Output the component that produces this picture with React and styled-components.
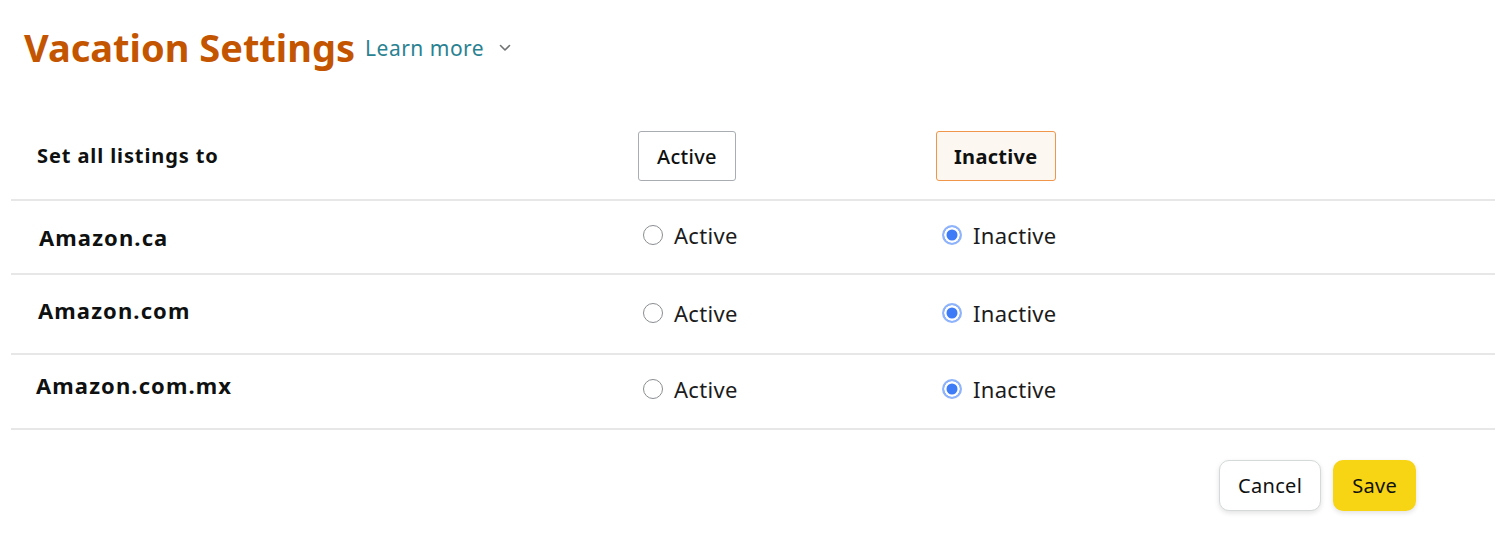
import React, { useState } from "react";
import styled, { createGlobalStyle } from "styled-components";

const GlobalStyle = createGlobalStyle`
  body {
    margin: 0;
    background: #fff;
    font-family: "Noto Sans", "Open Sans", Arial, sans-serif;
    color: #0f1111;
  }
`;

const Page = styled.div`
  width: 1508px;
  height: 534px;
  box-sizing: border-box;
  padding: 21px 13px 0 11px;
`;

const Header = styled.div`
  display: flex;
  align-items: baseline;
  padding-left: 13px;
  height: 90px;
`;

const Title = styled.h1`
  margin: 0;
  font-size: 38px;
  font-weight: 700;
  color: #c45500;
`;

const LearnMore = styled.a`
  margin-left: 10px;
  font-size: 21px;
  letter-spacing: 0.5px;
  color: #2a8291;
  text-decoration: none;
  display: inline-flex;
  align-items: center;
  gap: 15px;
  position: relative;
  top: -6px;
`;

const Table = styled.div`
  display: grid;
  grid-template-columns: 627px 298px 1fr;
`;

const Cell = styled.div`
  display: flex;
  align-items: center;
  height: ${(p) => p.h}px;
  border-bottom: 2px solid #e7e7e7;
  box-sizing: border-box;
  padding-left: ${(p) => p.pl || 0}px;
  padding-top: ${(p) => p.pt || 0}px;
  padding-bottom: ${(p) => p.pb || 0}px;
`;

const HeadLabel = styled.span`
  font-size: 20px;
  font-weight: 700;
  letter-spacing: 0.9px;
`;

const SiteLabel = styled.span`
  font-size: 22px;
  font-weight: 700;
  letter-spacing: 1.1px;
`;

const SetButton = styled.button`
  height: 50px;
  padding: 0 ${(p) => (p.selected ? 17 : 18)}px;
  font-family: inherit;
  font-size: 20px;
  letter-spacing: 0.3px;
  font-weight: ${(p) => (p.selected ? 700 : 500)};
  color: #0f1111;
  border-radius: 3px;
  border: 1.5px solid ${(p) => (p.selected ? "#f0964a" : "#a9adb2")};
  background: ${(p) => (p.selected ? "#fdf7f1" : "#fff")};
  cursor: pointer;
`;

const RadioLabel = styled.label`
  display: inline-flex;
  align-items: center;
  gap: 11px;
  font-size: 22px;
  letter-spacing: 0.3px;
  color: #1c1c1c;
  cursor: pointer;
  margin-left: ${(p) => p.ml || 0}px;
`;

const RadioCircle = styled.span`
  width: 20px;
  height: 20px;
  box-sizing: border-box;
  border-radius: 50%;
  border: ${(p) => (p.checked ? "2px solid #8fb4fb" : "1.5px solid #8a8d91")};
  background: ${(p) => (p.checked ? "#3d7bf7" : "#fff")};
  box-shadow: ${(p) => (p.checked ? "inset 0 0 0 2.5px #fff" : "none")};
`;

const Footer = styled.div`
  display: flex;
  justify-content: flex-end;
  gap: 12px;
  padding: 30px 79px 0 0;
`;

const FooterButton = styled.button`
  height: 51px;
  padding: 0 ${(p) => (p.primary ? 19 : 18)}px;
  border-radius: 10px;
  font-family: inherit;
  font-size: 20px;
  letter-spacing: 0.3px;
  color: #0f1111;
  border: ${(p) => (p.primary ? "none" : "1.5px solid #d5d9d9")};
  background: ${(p) => (p.primary ? "#f7d414" : "#fff")};
  box-shadow: 0 2px 5px rgba(15, 17, 17, 0.12);
  cursor: pointer;
`;

const Chevron = () => (
  <svg width="12" height="8" viewBox="0 0 12 8" fill="none">
    <path d="M1.5 1.5 6 6l4.5-4.5" stroke="#6f7373" strokeWidth="1.6" strokeLinecap="round" strokeLinejoin="round" />
  </svg>
);

const Radio = ({ checked, label, onClick, ml }) => (
  <RadioLabel onClick={onClick} ml={ml}>
    <RadioCircle checked={checked} />
    {label}
  </RadioLabel>
);

// per-row heights and nudges so the rows sit where the original does
const sites = [
  { name: "Amazon.ca", h: 74, pl: 28, textPb: 0, radioPb: 4 },
  { name: "Amazon.com", h: 80, pl: 27, textPb: 8, radioPb: 2 },
  { name: "Amazon.com.mx", h: 75, pl: 25, textPb: 14, radioPb: 6 },
];

export default function App() {
  const [status, setStatus] = useState({
    "Amazon.ca": "inactive",
    "Amazon.com": "inactive",
    "Amazon.com.mx": "inactive",
  });

  const setAll = (v) => {
    const next = {};
    sites.forEach((s) => (next[s.name] = v));
    setStatus(next);
  };

  const allInactive = Object.values(status).every((v) => v === "inactive");
  const allActive = Object.values(status).every((v) => v === "active");

  return (
    <>
      <GlobalStyle />
      <Page>
        <Header>
          <Title>Vacation Settings</Title>
          <LearnMore href="#">
            Learn more <Chevron />
          </LearnMore>
        </Header>
        <Table>
          <Cell h={90} pl={26} pt={0}>
            <HeadLabel>Set all listings to</HeadLabel>
          </Cell>
          <Cell h={90} pt={2}>
            <SetButton selected={allActive} onClick={() => setAll("active")}>
              Active
            </SetButton>
          </Cell>
          <Cell h={90} pt={2}>
            <SetButton selected={allInactive} onClick={() => setAll("inactive")}>
              Inactive
            </SetButton>
          </Cell>
          {sites.map((s) => (
            <React.Fragment key={s.name}>
              <Cell h={s.h} pl={s.pl} pb={s.textPb}>
                <SiteLabel>{s.name}</SiteLabel>
              </Cell>
              <Cell h={s.h} pb={s.radioPb}>
                <Radio
                  ml={5}
                  label="Active"
                  checked={status[s.name] === "active"}
                  onClick={() => setStatus({ ...status, [s.name]: "active" })}
                />
              </Cell>
              <Cell h={s.h} pb={s.radioPb}>
                <Radio
                  ml={6}
                  label="Inactive"
                  checked={status[s.name] === "inactive"}
                  onClick={() => setStatus({ ...status, [s.name]: "inactive" })}
                />
              </Cell>
            </React.Fragment>
          ))}
        </Table>
        <Footer>
          <FooterButton>Cancel</FooterButton>
          <FooterButton primary>Save</FooterButton>
        </Footer>
      </Page>
    </>
  );
}
